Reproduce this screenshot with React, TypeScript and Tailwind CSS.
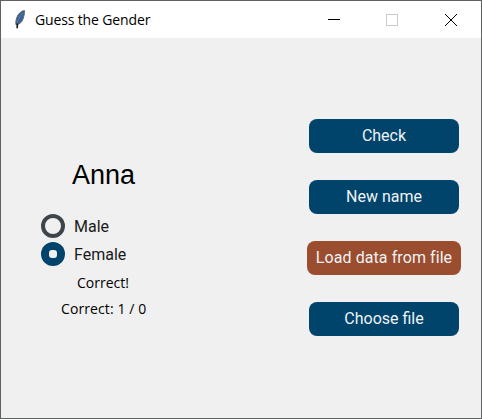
import React from "react";

const ui = "font-['Open_Sans','Noto_Sans',sans-serif]";

function Feather() {
  return (
    <svg width="12" height="20" viewBox="0 0 12 20" className="shrink-0">
      <path d="M11.4 .5C8 1 5 4 3.8 7.6C2.9 10.2 2.4 12.8 3.2 15C6.8 14.2 9 12 10 9C11 6 11.8 2.8 11.4 .5Z" fill="#38629a" stroke="#65686e" strokeWidth="1" />
      <path d="M9.6 3C6.6 6.4 4.8 10.5 4 14.4" fill="none" stroke="#7f8b99" strokeWidth=".6" />
      <path d="M4.4 13.4L4.2 18.2" stroke="#171717" strokeWidth="1.6" />
    </svg>
  );
}

function TitleBar() {
  return (
    <header className="flex h-[37px] shrink-0 items-center bg-white pl-3">
      <Feather />
      <h1 className={`ml-2.5 flex-1 whitespace-nowrap text-[14px] leading-5 tracking-[-0.14px] text-black ${ui}`}>
        Guess the Gender
      </h1>
      <svg width="130" height="13" viewBox="0 0 130 13" fill="none" shapeRendering="crispEdges" className="mr-[23px] shrink-0">
        <path d="M0 6.5H12" stroke="#000" />
        <path d="M58.5 1.5H69.5V12.5H58.5Z" stroke="#ccc" />
        <path d="M117 1L129 13M129 1L117 13" stroke="#000" strokeWidth="1" shapeRendering="auto" />
      </svg>
    </header>
  );
}

function Radio({ label, checked = false }: { label: string; checked?: boolean }) {
  return (
    <div role="radio" aria-checked={checked} className="flex h-7 items-center gap-[9px]">
      <span
        className={`flex size-6 items-center justify-center rounded-full ${
          checked ? "bg-[#00436b]" : "border-4 border-[#3e454a]"
        }`}
      >
        {checked && <span className="size-2 rounded-[3px] bg-[#f0f0f0]" />}
      </span>
      <span className="pt-0.5 font-[Roboto,sans-serif] text-[16px] leading-6 text-[#1a1a1a]">{label}</span>
    </div>
  );
}

function Button({ label, className = "w-[150px] bg-[#00436b]" }: { label: string; className?: string }) {
  return (
    <button
      className={`flex h-[34px] items-center justify-center whitespace-nowrap rounded-lg font-[Roboto,sans-serif] text-[16px] leading-6 text-[#eff3f5] ${className}`}
    >
      {label}
    </button>
  );
}

export default function App() {
  return (
    <div className="flex h-[419px] w-[482px] flex-col overflow-hidden border border-[#606166] bg-[#f0f0f0]">
      <TitleBar />
      <main className="flex flex-1">
        <section className="w-[220px] pl-10 pt-[119px]">
          <p className="ml-[31px] font-['Liberation_Sans',Arial,sans-serif] text-[27px] leading-9 text-black">Anna</p>
          <div className="mt-[19px]" role="radiogroup">
            <Radio label="Male" />
            <Radio label="Female" checked />
          </div>
          <p className={`ml-9 mt-[5px] text-[14px] leading-5 text-black ${ui}`}>Correct!</p>
          <p className={`ml-5 mt-1.5 whitespace-nowrap text-[14px] leading-5 tracking-[0.1px] text-black ${ui}`}>Correct: 1 / 0</p>
        </section>
        <section className="ml-[86px] flex w-[154px] flex-col items-center gap-[27px] pt-[81px]">
          <Button label="Check" />
          <Button label="New name" />
          <Button label="Load data from file" className="w-[154px] bg-[#9b4d2f] tracking-[0.08px]" />
          <Button label="Choose file" />
        </section>
      </main>
    </div>
  );
}
